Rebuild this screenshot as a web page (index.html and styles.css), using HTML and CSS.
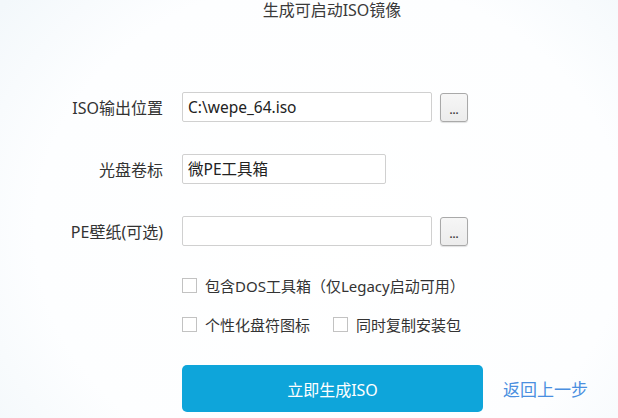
FILE: index.html
```html
<!DOCTYPE html>
<html lang="zh-CN">
<head>
<meta charset="utf-8">
<title>生成可启动ISO镜像</title>
<link rel="stylesheet" href="styles.css">
</head>
<body>
<div class="page">
  <div class="title">生成可启动ISO镜像</div>
  <div class="form">
    <div class="row">
      <label class="label">ISO输出位置</label>
      <div class="input wide">C:\wepe_64.iso</div>
      <button class="browse">...</button>
    </div>
    <div class="row">
      <label class="label">光盘卷标</label>
      <div class="input narrow">微PE工具箱</div>
    </div>
    <div class="row">
      <label class="label">PE壁纸(可选)</label>
      <div class="input wide"></div>
      <button class="browse">...</button>
    </div>
    <div class="checks">
      <div class="check-row">
        <span class="check"><span class="box"></span>包含DOS工具箱（仅Legacy启动可用）</span>
      </div>
      <div class="check-row">
        <span class="check"><span class="box"></span>个性化盘符图标</span>
        <span class="check"><span class="box"></span>同时复制安装包</span>
      </div>
    </div>
    <div class="actions">
      <button class="primary">立即生成ISO</button>
      <a class="back">返回上一步</a>
    </div>
  </div>
</div>
</body>
</html>
```

FILE: styles.css
```css
html, body {
  margin: 0;
  padding: 0;
  width: 618px;
  height: 418px;
  overflow: hidden;
}
body {
  font-family: "Noto Sans", "Noto Sans CJK SC", sans-serif;
  color: #333;
  background: radial-gradient(ellipse 420px 360px at 330px 230px, #ffffff 0%, #fdfeff 70%, #f3f8fb 100%);
}
.page {
  display: flex;
  flex-direction: column;
  height: 418px;
}
.title {
  height: 20px;
  line-height: 20px;
  font-size: 16px;
  padding-left: 46px;
  text-align: center;
  color: #3a3a3a;
}
.form {
  margin-top: 72px;
  display: flex;
  flex-direction: column;
  gap: 32px;
}
.row {
  display: flex;
  align-items: center;
  height: 30px;
}
.label {
  width: 163px;
  margin-right: 19px;
  text-align: right;
  font-size: 16px;
  color: #333;
}
.input {
  box-sizing: border-box;
  height: 30px;
  border: 1px solid #d0d0d0;
  border-radius: 2px;
  background: #fff;
  padding: 0 5px;
  font-size: 15.5px;
  line-height: 28px;
  color: #222;
}
.wide { width: 250px; }
.narrow { width: 204px; }
.browse {
  box-sizing: border-box;
  margin-left: 8px;
  width: 28px;
  height: 29px;
  border: 1px solid #a9a9a9;
  border-radius: 3px;
  background: linear-gradient(#f6f6f6, #ececec);
  box-shadow: 0 1px 1px rgba(0,0,0,0.12);
  font-family: "Liberation Sans", sans-serif;
  font-size: 11px;
  font-weight: bold;
  color: #444;
  padding: 6px 0 0;
  line-height: 14px;
}
.checks {
  margin-top: -3px;
  margin-left: 182px;
  display: flex;
  flex-direction: column;
  gap: 19px;
}
.check-row {
  display: flex;
  align-items: center;
  gap: 23px;
  height: 20px;
}
.check {
  display: flex;
  align-items: center;
  gap: 8px;
  font-size: 15px;
  color: #333;
}
.box {
  box-sizing: border-box;
  width: 15px;
  height: 15px;
  border: 1px solid #c2c2c2;
  background: #fff;
}
.actions {
  margin-top: -1px;
  margin-left: 182px;
  display: flex;
  align-items: center;
}
.primary {
  width: 301px;
  height: 47px;
  border: none;
  border-radius: 5px;
  background: #0ea5da;
  color: #fff;
  font-family: "Noto Sans", "Noto Sans CJK SC", sans-serif;
  font-size: 16px;
}
.back {
  margin-left: 20px;
  font-size: 17px;
  color: #4a8fe0;
}
```
